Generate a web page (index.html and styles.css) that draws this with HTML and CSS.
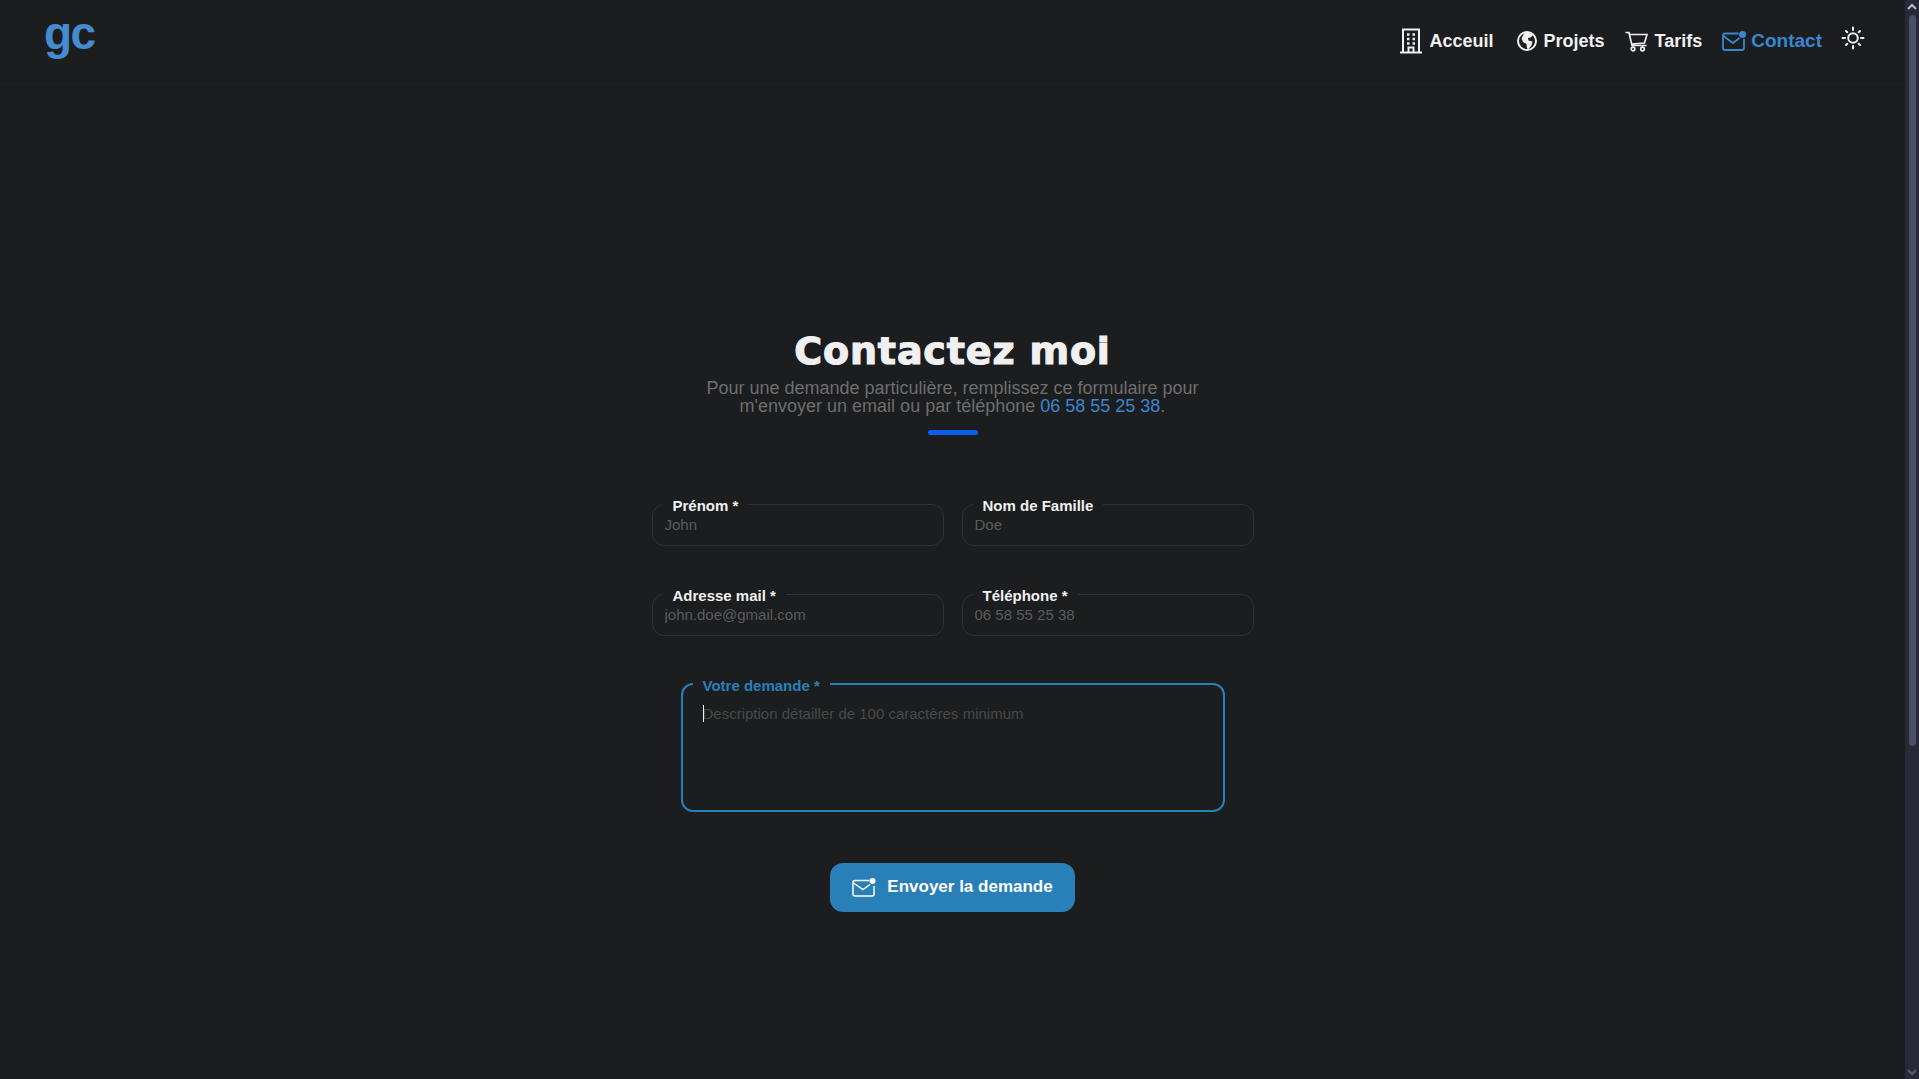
FILE: index.html
```html
<!DOCTYPE html>
<html lang="fr">
<head>
    <meta charset="UTF-8">
    <meta name="viewport" content="width=device-width, initial-scale=1.0">
    <title>Contact</title>
    <link rel="stylesheet" href="styles.css">
</head>
<body>

<div class="page">
    <header class="topbar">
        <a class="logo" href="#">gc</a>
        <nav class="nav">
            <a class="nav-link nav-link-home" href="#">
                <svg class="nav-icon" width="24" height="26" viewBox="0 0 24 26" fill="none" stroke="currentColor" stroke-width="2">
                    <path d="M1 24.500h22M4 24.500V1.500h16V24.500M9.500 24.500v-5h5v5"/>
                    <path d="M8 6.500h2.500M13.500 6.500h2.500M8 11h2.500M13.500 11h2.500M8 15.500h2.500M13.500 15.500h2.500" stroke-width="2.600"/>
                </svg>
                Acceuil
            </a>
            <a class="nav-link nav-link-projects" href="#">
                <svg class="nav-icon" width="20" height="20" viewBox="0 0 20 20">
                    <circle cx="10" cy="10" r="9" fill="none" stroke="currentColor" stroke-width="2"/>
                    <path fill="currentColor" d="M7 2.500C9 1 14 1.500 16 4L13.500 6.500l-2.500.5.500 2.500 4 1-1 4-3 3.500-1.500-.5-.5-4.500-3.500-2-1.500-3.500z"/>
                </svg>
                Projets
            </a>
            <a class="nav-link" href="#">
                <svg class="nav-icon" width="23" height="21" viewBox="0 0 23 21" fill="none" stroke="currentColor" stroke-width="1.700">
                    <path d="M.5 1.500h3.500l3 13h14.500M4.500 3.500h17.500l-2.500 8.500-12.500 1"/>
                    <circle cx="8" cy="18" r="1.800"/>
                    <circle cx="17.500" cy="18" r="1.800"/>
                </svg>
                Tarifs
            </a>
            <a class="nav-link nav-link-active" href="#">
                <svg class="nav-icon" width="24" height="20" viewBox="0 0 24 20" fill="none" stroke="currentColor" stroke-width="1.800">
                    <path d="M16.500 2.500H3q-2 0-2 2v12.500q0 2 2 2h17q2 0 2-2V8"/>
                    <path d="M1.500 5l9.500 7 6.500-5"/>
                    <circle cx="20.500" cy="3.500" r="3.500" fill="currentColor" stroke="none"/>
                </svg>
                Contact
            </a>
            <button class="theme-toggle" type="button" aria-label="Thème">
                <svg width="24" height="24" viewBox="0 0 24 24" fill="none" stroke="currentColor" stroke-width="2" stroke-linecap="round">
                    <circle cx="12" cy="12" r="4.800"/>
                    <path d="M12 1.500v2.500M12 20v2.500M1.500 12h2.500M20 12h2.500M5 5l1.300 1.300M17.700 17.700l1.300 1.300M5 19l1.300-1.300M17.700 6.300l1.300-1.300"/>
                </svg>
            </button>
        </nav>
    </header>

    <main class="content">
        <h1 class="title">Contactez moi</h1>
        <p class="subtitle">Pour une demande particulière, remplissez ce formulaire pour<br>m'envoyer un email ou par téléphone <a href="#">06 58 55 25 38</a>.</p>
        <div class="accent"></div>

        <form class="contact-form">
            <div class="field-grid">
                <div class="field">
                    <label for="prenom">Prénom *</label>
                    <input id="prenom" type="text" placeholder="John">
                </div>
                <div class="field">
                    <label for="nom">Nom de Famille</label>
                    <input id="nom" type="text" placeholder="Doe">
                </div>
                <div class="field">
                    <label for="mail">Adresse mail *</label>
                    <input id="mail" type="text" placeholder="john.doe@gmail.com">
                </div>
                <div class="field">
                    <label for="tel">Téléphone *</label>
                    <input id="tel" type="text" placeholder="06 58 55 25 38">
                </div>
            </div>

            <div class="field field-area">
                <label for="demande">Votre demande *</label>
                <textarea id="demande" placeholder="Description détailler de 100 caractères minimum"></textarea>
                <span class="caret"></span>
            </div>

            <button class="send-btn" type="button">
                <svg width="24" height="19" viewBox="0 0 24 19" fill="none" stroke="currentColor" stroke-width="1.500">
                    <path d="M17 2.500H3q-2 0-2 2v11.500q0 2 2 2h17q2 0 2-2V8"/>
                    <path d="M1.500 5l9.500 6.500 7-5"/>
                    <circle cx="20.500" cy="3" r="3" fill="currentColor" stroke="none"/>
                </svg>
                Envoyer la demande
            </button>
        </form>
    </main>
</div>

<div class="scrollbar">
    <svg width="14" height="14" viewBox="0 0 14 14" fill="none" stroke="#b9bcc6" stroke-width="2"><path d="M3 9l4-4 4 4"/></svg>
    <div class="scroll-track"><div class="scroll-thumb"></div></div>
    <svg width="14" height="14" viewBox="0 0 14 14" fill="none" stroke="#5c5f6b" stroke-width="2"><path d="M3 5l4 4 4-4"/></svg>
</div>

</body>
</html>
```

FILE: styles.css
```css
* {
    box-sizing: border-box;
}
body {
    font-family: "Liberation Sans", Arial, sans-serif;
    background-color: #1b1d1f;
    color: #f0f0f0;
    display: flex;
    height: 100vh;
    margin: 0;
    overflow: hidden;
}
a {
    text-decoration: none;
}
.page {
    flex: 1;
    display: flex;
    flex-direction: column;
}
.topbar {
    height: 80px;
    display: flex;
    justify-content: space-between;
    padding: 0 41px 0 44px;
    box-shadow: 0 1px 2px rgba(0, 0, 0, 0.12);
}
.logo {
    font-size: 46px;
    font-weight: bold;
    letter-spacing: -1.500px;
    line-height: 66px;
    color: #458bd0;
}
.nav {
    display: flex;
    align-items: center;
    height: 82px;
}
.nav-link {
    display: flex;
    align-items: center;
    gap: 7px;
    margin-right: 22px;
    font-size: 18px;
    font-weight: bold;
    color: #f0f0f0;
}
.nav-link-home {
    margin-right: 23px;
}
.nav-link-projects {
    margin-right: 20px;
}
.nav-link-active {
    color: #3a86d1;
    font-size: 19px;
    gap: 5px;
    margin-left: -2px;
    margin-right: 18px;
}
.theme-toggle {
    border: none;
    background: none;
    padding: 0;
    color: #f0f0f0;
    height: 24px;
    margin-top: -6px;
    margin-left: 1px;
    margin-right: -1px;
}
.content {
    display: flex;
    flex-direction: column;
    align-items: center;
    padding-top: 250px;
}
/* no Arial Black here, DejaVu bold with a stroke is the closest weight */
.title {
    margin: 0;
    font-family: "DejaVu Sans", sans-serif;
    font-size: 38px;
    line-height: 42px;
    font-weight: bold;
    letter-spacing: 0.850px;
    -webkit-text-stroke: 1.200px #f0f0f0;
}
.subtitle {
    margin: 7px 0 0;
    font-size: 18px;
    line-height: 18px;
    text-align: center;
    color: #6e6e6e;
}
.subtitle a {
    color: #3a86d1;
}
.accent {
    width: 50px;
    height: 5px;
    margin-top: 15px;
    border-radius: 3px;
    background-color: #0d5ef0;
}
.contact-form {
    width: 602px;
    margin-top: 69px;
    display: flex;
    flex-direction: column;
    align-items: center;
}
.field-grid {
    width: 100%;
    display: grid;
    grid-template-columns: 292px 292px;
    column-gap: 18px;
    row-gap: 48px;
}
.field {
    position: relative;
}
.field label {
    position: absolute;
    left: 11px;
    top: -7px;
    padding: 0 10px;
    font-size: 15px;
    line-height: 17px;
    font-weight: bold;
    color: #f0f0f0;
    background-color: #1b1d1f;
}
.field input {
    display: block;
    width: 100%;
    height: 42px;
    padding: 0 12px 2px;
    border: 1px solid #303236;
    border-radius: 12px;
    background: transparent;
    font-family: inherit;
    font-size: 15px;
    color: #f0f0f0;
    outline: none;
}
.field input::placeholder {
    color: #5c5c5c;
}
.field-area {
    width: 544px;
    margin-top: 47px;
}
.field-area label {
    left: 12px;
    top: -6px;
    color: #2980b9;
}
.field-area textarea {
    display: block;
    width: 100%;
    height: 129px;
    padding: 20px 20px;
    border: 2px solid #2980b9;
    border-radius: 12px;
    background: transparent;
    font-family: inherit;
    font-size: 15px;
    line-height: 17px;
    resize: none;
    outline: none;
}
.field-area textarea::placeholder {
    color: #4a4a4a;
}
.caret {
    position: absolute;
    left: 22px;
    top: 22px;
    width: 1px;
    height: 17px;
    background-color: #f0f0f0;
}
.send-btn {
    width: 245px;
    height: 49px;
    margin-top: 51px;
    padding-bottom: 2px;
    display: flex;
    align-items: center;
    justify-content: center;
    gap: 11px;
    border: none;
    border-radius: 13px;
    background-color: #2980b9;
    color: white;
    font-family: inherit;
    font-size: 17px;
    font-weight: bold;
}
.scrollbar {
    width: 14px;
    height: 100%;
    display: flex;
    flex-direction: column;
    background-color: #272a36;
}
.scroll-track {
    flex: 1;
    padding: 1px 3px 0 4px;
}
.scroll-thumb {
    height: 731px;
    border-radius: 6px;
    background-color: #4a4e66;
}
```
